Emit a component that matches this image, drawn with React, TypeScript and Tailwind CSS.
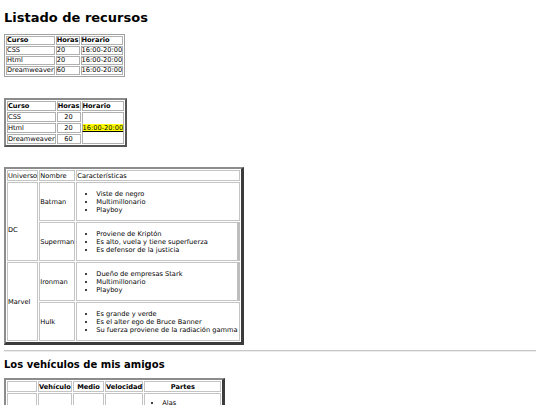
import React from "react";

const t1cell = "border border-[#b0b0b0] px-0 py-0 leading-[7px] h-[9px] align-middle whitespace-nowrap";
const t3cell = "border border-[#c4c4c4] px-0 py-0 leading-[8px] align-middle whitespace-nowrap";

function List({ items }: { items: string[] }) {
  return (
    <ul className="list-disc pl-[19px] pr-[1px] my-[6.5px]">
      {items.map((i) => (
        <li key={i} className="leading-[8px]">{i}</li>
      ))}
    </ul>
  );
}

export default function App() {
  return (
    <div className="w-[540px] h-[405px] overflow-hidden bg-white text-black antialiased font-['DejaVu_Sans',sans-serif] text-[6.65px] px-[4px]">
      <h1 className="text-[13px] font-bold leading-[15px] pt-[10px] mb-[9px]">Listado de recursos</h1>

      <table className="border-separate border-spacing-[1px] border border-[#a0a0a0]">
        <tbody>
          <tr>
            <th className={`${t1cell} text-left font-bold`}>Curso</th>
            <th className={`${t1cell} text-left font-bold`}>Horas</th>
            <th className={`${t1cell} text-left font-bold`}>Horario</th>
          </tr>
          {[
            ["CSS", "20"],
            ["Html", "20"],
            ["Dreamweaver", "60"],
          ].map(([c, h]) => (
            <tr key={c}>
              <td className={`${t1cell} text-left`}>{c}</td>
              <td className={`${t1cell} text-left`}>{h}</td>
              <td className={`${t1cell} text-left`}>16:00-20:00</td>
            </tr>
          ))}
        </tbody>
      </table>

      <table className="mt-[21px] border-separate border-spacing-[1px] border-2 border-t-[#8c8c8c] border-l-[#8c8c8c] border-r-[#555] border-b-[#555]">
        <tbody>
          <tr>
            <th className={`${t1cell} h-[10px] text-left font-bold`}>Curso</th>
            <th className={`${t1cell} text-left font-bold`}>Horas</th>
            <th className={`${t1cell} text-left font-bold`}>Horario</th>
          </tr>
          <tr>
            <td className={`${t1cell} h-[10px] text-left`}>CSS</td>
            <td className={`${t1cell} text-center`}>20</td>
            <td rowSpan={3} className={`${t1cell} text-left`}>
              <span className="bg-[#ffff00] underline">16:00-20:00</span>
            </td>
          </tr>
          <tr>
            <td className={`${t1cell} h-[10px] text-left`}>Html</td>
            <td className={`${t1cell} text-center`}>20</td>
          </tr>
          <tr>
            <td className={`${t1cell} h-[10px] text-left`}>Dreamweaver</td>
            <td className={`${t1cell} text-center`}>60</td>
          </tr>
        </tbody>
      </table>

      <table className="mt-[20px] border-separate border-spacing-[1px] border-l-2 border-t-2 border-r-[3px] border-b-[3px] border-t-[#8c8c8c] border-l-[#8c8c8c] border-r-[#3c3c3c] border-b-[#3c3c3c]">
        <tbody>
          <tr>
            <td className={`${t3cell} h-[11px] text-left`}>Universo</td>
            <td className={`${t3cell} text-left`}>Nombre</td>
            <td className={`${t3cell} text-left`}>Características</td>
          </tr>
          <tr>
            <td rowSpan={2} className={`${t3cell} text-left pt-[16px]`}>DC</td>
            <td className={`${t3cell} text-left`}>Batman</td>
            <td className={`${t3cell} text-left`}>
              <List items={["Viste de negro", "Multimillonario", "Playboy"]} />
            </td>
          </tr>
          <tr>
            <td className={`${t3cell} text-left`}>Superman</td>
            <td className={`${t3cell} text-left border-r-[3px] border-r-[#bdbdbd]`}>
              <List items={["Proviene de Kriptón", "Es alto, vuela y tiene superfuerza", "Es defensor de la justicia"]} />
            </td>
          </tr>
          <tr>
            <td rowSpan={2} className={`${t3cell} text-left`}>Marvel</td>
            <td className={`${t3cell} text-left`}>Ironman</td>
            <td className={`${t3cell} text-left border-r-[3px] border-r-[#bdbdbd]`}>
              <List items={["Dueño de empresas Stark", "Multimillonario", "Playboy"]} />
            </td>
          </tr>
          <tr>
            <td className={`${t3cell} text-left`}>Hulk</td>
            <td className={`${t3cell} text-left`}>
              <List items={["Es grande y verde", "Es el alter ego de Bruce Banner", "Su fuerza proviene de la radiación gamma"]} />
            </td>
          </tr>
        </tbody>
      </table>

      <div className="mt-[5px] h-[2px] border-t border-t-[#c8c8c8] border-b border-b-[#ececec]" />

      <h2 className="text-[10px] font-bold leading-[12px] mt-[7px] mb-[7px]">Los vehículos de mis amigos</h2>

      <table className="border-separate border-spacing-[1px] border-l-2 border-t-2 border-r-[3px] border-b-[3px] border-t-[#8c8c8c] border-l-[#8c8c8c] border-r-[#3c3c3c] border-b-[#3c3c3c]">
        <tbody>
          <tr>
            <th className={`${t3cell} w-[30px] h-[11px] text-center font-bold`}></th>
            <th className={`${t3cell} w-[34px] text-center font-bold`}>Vehículo</th>
            <th className={`${t3cell} w-[31px] text-center font-bold`}>Medio</th>
            <th className={`${t3cell} w-[38px] text-center font-bold`}>Velocidad</th>
            <th className={`${t3cell} w-[77px] text-center font-bold`}>Partes</th>
          </tr>
          <tr>
            <td className={`${t3cell} h-[40px]`}></td>
            <td className={t3cell}></td>
            <td className={t3cell}></td>
            <td className={t3cell}></td>
            <td className={`${t3cell} text-left align-top`}>
              <ul className="list-disc pl-[17px] my-[5px]">
                <li className="leading-[8px]">Alas</li>
              </ul>
            </td>
          </tr>
        </tbody>
      </table>
    </div>
  );
}
